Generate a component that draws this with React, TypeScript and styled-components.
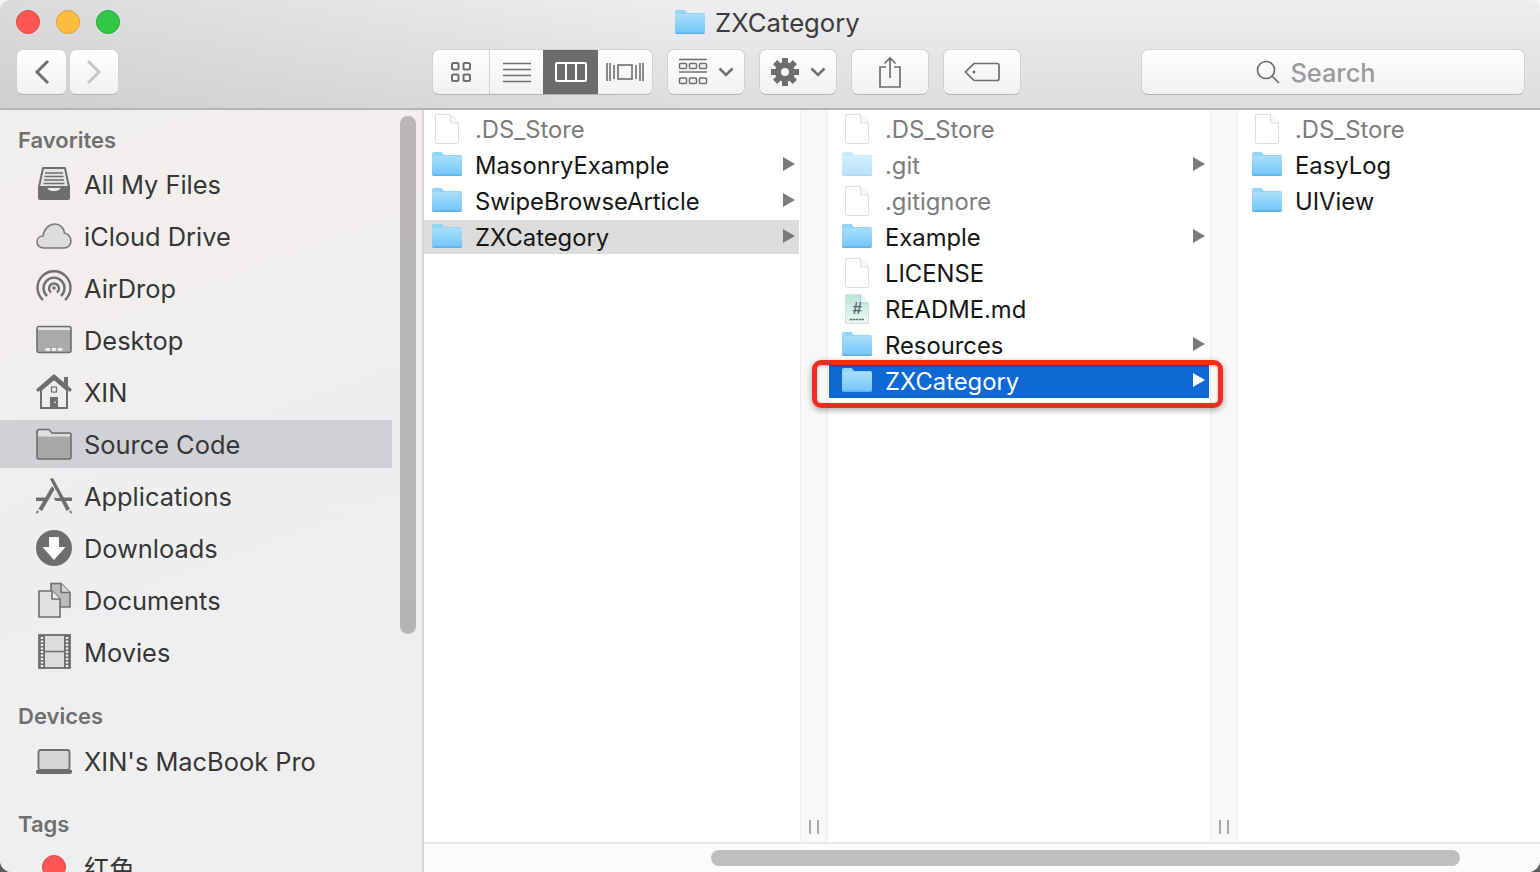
import React from 'react'
import styled, { createGlobalStyle } from 'styled-components'

const GlobalStyle = createGlobalStyle`
    html, body {
        margin: 0;
        padding: 0;
        height: 100%;
        overflow: hidden;
        background: linear-gradient(#f4f4f4 0%, #f4f4f4 50%, #5c5c5c 100%);
    }
    * {
        box-sizing: border-box;
    }
`

const GREY = '#6e6e6e'

const FolderIcon = ({ faded = false }: { faded?: boolean }) => (
    <svg width="30" height="26" viewBox="0 1.5 30 26" opacity={faded ? 0.5 : 1}>
        <defs>
            <linearGradient id="folderBody" x1="0" y1="0" x2="0" y2="1">
                <stop offset="0" stopColor="#a9defc" />
                <stop offset="1" stopColor="#72c6f8" />
            </linearGradient>
        </defs>
        <path d="M0 3.5a2 2 0 0 1 2-2h7.5l2.5 3h16a2 2 0 0 1 2 2V23a2 2 0 0 1-2 2H2a2 2 0 0 1-2-2z" fill="#92d4fa" />
        <path d="M0 7a1.5 1.5 0 0 1 1.5-1.5h27A1.5 1.5 0 0 1 30 7v16a2 2 0 0 1-2 2H2a2 2 0 0 1-2-2z" fill="url(#folderBody)" />
        <path d="M0 24h30a2 2 0 0 1-2 1.5H2A2 2 0 0 1 0 24z" fill="#5eb1e4" />
    </svg>
)

const FileIcon = () => (
    <svg width="30" height="32" viewBox="0 0 30 32">
        <path d="M3.5 1.5h15l8 8.5v19a1.500 1.500 0 0 1-1.500 1.500H5A1.500 1.500 0 0 1 3.500 29z" fill="#fff" stroke="#dedede" />
        <path d="M18.500 1.500V10h8" fill="#f7f7f7" stroke="#dedede" />
    </svg>
)

const MarkdownIcon = () => (
    <svg width="30" height="32" viewBox="0 0 30 32">
        <defs>
            <linearGradient id="mdPage" x1="0" y1="0" x2="0" y2="1">
                <stop offset="0" stopColor="#b9e5da" />
                <stop offset="1" stopColor="#eef8f6" />
            </linearGradient>
        </defs>
        <path d="M3.500 1.500h15l8 8.500v19a1.500 1.500 0 0 1-1.500 1.500H5A1.500 1.500 0 0 1 3.500 29z" fill="url(#mdPage)" stroke="#d6dedc" />
        <path d="M18.500 1.500V10h8" fill="#e9f6f2" stroke="#a9d3c9" />
        <text x="15" y="21" textAnchor="middle" fontSize="17" fontWeight="700" fontStyle="italic" fontFamily="Liberation Sans" fill="#5a6765">#</text>
        <path d="M7.500 26.500h15" stroke="#59706b" strokeWidth="1.400" strokeDasharray="2.400 .6" />
    </svg>
)

const AllFilesIcon = () => (
    <svg width="36" height="36" viewBox="0 0 36 36">
        <path d="M7 2h22l4 19H3z" fill="#e6e6e6" stroke={GREY} strokeWidth="2" strokeLinejoin="round" />
        <path d="M9 7h18M8.500 10.500h19M8 14h20M7.500 17.500h21" stroke={GREY} strokeWidth="1.500" />
        <path d="M2 21h9c1 3 3 4 7 4s6-1 7-4h9v11a2 2 0 0 1-2 2H4a2 2 0 0 1-2-2z" fill={GREY} />
    </svg>
)

const CloudIcon = () => (
    <svg width="36" height="36" viewBox="0 0 36 36">
        <path d="M8 30c-4.500 0-7-3-7-6 0-4 3-6 6-6 1-7 6-12 12-12 5 0 9 4 9.500 9 3.500.5 6.500 4 6.500 8 0 4-3 7-7 7z" fill="#dddddd" stroke="#777" strokeWidth="1.600" />
    </svg>
)

const AirDropIcon = () => (
    <svg width="36" height="36" viewBox="0 0 36 36">
        <g fill="none" stroke={GREY} strokeWidth="2.400">
            <path d="M7 30A16.500 16.500 0 1 1 29 30" />
            <path d="M11 26A10.500 10.500 0 1 1 25 26" />
            <path d="M15 22.500A5 5 0 1 1 21 22.500" />
        </g>
        <circle cx="18" cy="18" r="1.800" fill={GREY} />
    </svg>
)

const DesktopIcon = () => (
    <svg width="36" height="36" viewBox="0 0 36 36">
        <rect x="1" y="4.500" width="34" height="26" rx="2" fill="#aaaaaa" stroke={GREY} strokeWidth="1.600" />
        <path d="M2 5.500h32v2.500H2z" fill="#e6e6e6" />
        <path d="M9.500 26h4.500v3H9.500zM15.700 26h4.500v3h-4.500zM22 26h4.500v3H22z" fill="#ececec" />
    </svg>
)

const HomeIcon = () => (
    <svg width="36" height="36" viewBox="0 0 36 36">
        <path d="M5 16v18h26V16L18 5z" fill="#ededee" stroke={GREY} strokeWidth="2" />
        <path d="M18 0l10 8.500V3h4v9l4 3.500-2 2.500L18 5 2 18l-2-2.500z" fill={GREY} />
        <rect x="15.500" y="13" width="5" height="5" fill="none" stroke={GREY} strokeWidth="1.200" />
        <path d="M14 23h8v11h-8z" fill={GREY} />
        <rect x="18.500" y="27.500" width="1.500" height="1.500" fill="#ededee" />
    </svg>
)

const SidebarFolderIcon = () => (
    <svg width="36" height="36" viewBox="0 0 36 36">
        <path d="M1 5.500a2 2 0 0 1 2-2h10l3 3.500h17a2 2 0 0 1 2 2V31a2 2 0 0 1-2 2H3a2 2 0 0 1-2-2z" fill="#a7a8aa" stroke={GREY} strokeWidth="1.600" />
        <path d="M2 4.500h10.500L16 8h18v2.500H2z" fill="#dedfe1" />
    </svg>
)

const ApplicationsIcon = () => (
    <svg width="36" height="36" viewBox="0 0 36 36">
        <path d="M14 1l3-1 17 31-3.500 2z" fill={GREY} />
        <path d="M16 8l2.500 3.500L6 33l-3.500-2z" fill={GREY} />
        <path d="M0 19.500h9.500L8 23H0zM17.500 19.500H36V23H19.500z" fill={GREY} />
        <path d="M20 12l4 8h-7z" fill="#e4e4e4" />
        <path d="M1 32l-1 4 3-2zM35 32l1 4-3-2z" fill={GREY} />
    </svg>
)

const DownloadsIcon = () => (
    <svg width="36" height="36" viewBox="0 0 36 36">
        <circle cx="18" cy="18" r="18" fill={GREY} />
        <path d="M13 7h10v10h6.500L18 30 6.500 17H13z" fill="#fff" />
    </svg>
)

const DocumentsIcon = () => (
    <svg width="36" height="36" viewBox="0 0 36 36">
        <path d="M15 1.500h10l9 9V25H15z" fill="#bcbcbc" stroke={GREY} strokeWidth="1.600" />
        <path d="M25 1.500v9h9" fill="#d8d8d8" stroke={GREY} strokeWidth="1.600" />
        <path d="M3 9h13l8 8v18H3z" fill="#e2e2e2" stroke={GREY} strokeWidth="1.600" />
        <path d="M16 9v8h8" fill="#f0f0f0" stroke={GREY} strokeWidth="1.600" />
    </svg>
)

const MoviesIcon = () => (
    <svg width="36" height="36" viewBox="0 0 36 36">
        <rect x="3" y="1" width="31" height="33" fill="#dcdcdc" stroke={GREY} strokeWidth="1.800" />
        <path d="M3 1h6v33H3zM28 1h6v33h-6z" fill={GREY} />
        <path d="M9 17.500h19" stroke={GREY} strokeWidth="1.600" />
        <path d="M6 3v30M31 3v30" stroke="#f2f2f2" strokeWidth="2.400" strokeDasharray="2 1.500" />
    </svg>
)

const LaptopIcon = () => (
    <svg width="36" height="36" viewBox="0 0 36 36">
        <rect x="2.500" y="7" width="31" height="20" rx="2" fill="#d6d6d6" stroke={GREY} strokeWidth="1.800" />
        <path d="M0 27h36v2a2 2 0 0 1-2 2H2a2 2 0 0 1-2-2z" fill={GREY} />
    </svg>
)

const TagDotIcon = () => (
    <svg width="36" height="36" viewBox="0 0 36 36">
        <circle cx="18" cy="18" r="11.500" fill="#fc5753" stroke="#e2443f" />
    </svg>
)

const IconsIcon = () => (
    <svg width="24" height="24" viewBox="0 0 24 24" fill="none" stroke={GREY} strokeWidth="2">
        <rect x="3" y="3" width="6.500" height="6.500" rx="1.500" />
        <rect x="14.500" y="3" width="6.500" height="6.500" rx="1.500" />
        <rect x="3" y="14.500" width="6.500" height="6.500" rx="1.500" />
        <rect x="14.500" y="14.500" width="6.500" height="6.500" rx="1.500" />
    </svg>
)

const ListIcon = () => (
    <svg width="30" height="24" viewBox="0 0 30 24" stroke={GREY} strokeWidth="1.600">
        <path d="M1 3.500h28M1 9.500h28M1 15.500h28M1 21.500h28" />
    </svg>
)

const ColumnsIcon = () => (
    <svg width="32" height="24" viewBox="0 0 32 24" fill="none" stroke="#fff" strokeWidth="2">
        <rect x="1" y="3" width="30" height="18" rx="1" />
        <path d="M11 3v18M21 3v18" />
    </svg>
)

const CoverFlowIcon = () => (
    <svg width="38" height="24" viewBox="0 0 38 24" fill="none" stroke={GREY} strokeWidth="1.600">
        <rect x="12" y="5" width="14" height="14" />
        <path d="M1 3v18M4 3v18M8 5l0 14 M37 3v18M34 3v18M30 5v14" />
    </svg>
)

const ArrangeIcon = () => (
    <svg width="30" height="28" viewBox="0 0 30 28" fill="none" stroke={GREY} strokeWidth="1.500">
        <path d="M1 1.500h28M1 14h28" />
        <rect x="1.500" y="5.500" width="7" height="5" rx="1" />
        <rect x="11.500" y="5.500" width="7" height="5" rx="1" />
        <rect x="21.500" y="5.500" width="7" height="5" rx="1" />
        <rect x="1.500" y="20" width="7" height="5.500" rx="1" />
        <rect x="11.500" y="20" width="7" height="5.500" rx="1" />
        <rect x="21.500" y="20" width="7" height="5.500" rx="1" />
    </svg>
)

const GearIcon = () => {
    const teeth = [0, 45, 90, 135, 180, 225, 270, 315]
    return (
        <svg width="30" height="30" viewBox="0 0 30 30">
            {teeth.map(deg => (
                <rect key={deg} x="12" y="1" width="6" height="7" fill={GREY} transform={`rotate(${deg} 15 15)`} />
            ))}
            <circle cx="15" cy="15" r="10" fill={GREY} />
            <circle cx="15" cy="15" r="4" fill="#f4f4f4" />
        </svg>
    )
}

const Chevron = () => (
    <svg width="16" height="10" viewBox="0 0 16 10" fill="none" stroke={GREY} strokeWidth="2.600">
        <path d="M1.500 1.500L8 8l6.500-6.500" />
    </svg>
)

const ShareIcon = () => (
    <svg width="24" height="32" viewBox="0 0 24 32" fill="none" stroke={GREY} strokeWidth="1.700">
        <path d="M8 11H2v20h20V11h-6" />
        <path d="M12 22V2M6.500 7.500L12 2l5.500 5.500" />
    </svg>
)

const TagIcon = () => (
    <svg width="36" height="20" viewBox="0 0 36 20" fill="none" stroke={GREY} strokeWidth="1.700">
        <path d="M10 1.500h23a2 2 0 0 1 2 2v13a2 2 0 0 1-2 2H10L1.500 10z" />
        <circle cx="10" cy="10" r="1.500" fill={GREY} stroke="none" />
    </svg>
)

const SearchIcon = () => (
    <svg width="24" height="24" viewBox="0 0 24 24" fill="none" stroke={GREY} strokeWidth="1.700">
        <circle cx="10" cy="10" r="8.500" />
        <path d="M16 16l7 7" />
    </svg>
)

type SideItem = { label: string; icon: React.ReactNode; selected?: boolean }

const favorites: SideItem[] = [
    { label: 'All My Files', icon: <AllFilesIcon /> },
    { label: 'iCloud Drive', icon: <CloudIcon /> },
    { label: 'AirDrop', icon: <AirDropIcon /> },
    { label: 'Desktop', icon: <DesktopIcon /> },
    { label: 'XIN', icon: <HomeIcon /> },
    { label: 'Source Code', icon: <SidebarFolderIcon />, selected: true },
    { label: 'Applications', icon: <ApplicationsIcon /> },
    { label: 'Downloads', icon: <DownloadsIcon /> },
    { label: 'Documents', icon: <DocumentsIcon /> },
    { label: 'Movies', icon: <MoviesIcon /> },
]

type FileEntry = { name: string; kind: 'file' | 'folder' | 'md'; hidden?: boolean; state?: 'parent' | 'active' }

const firstColumn: FileEntry[] = [
    { name: '.DS_Store', kind: 'file', hidden: true },
    { name: 'MasonryExample', kind: 'folder' },
    { name: 'SwipeBrowseArticle', kind: 'folder' },
    { name: 'ZXCategory', kind: 'folder', state: 'parent' },
]

const secondColumn: FileEntry[] = [
    { name: '.DS_Store', kind: 'file', hidden: true },
    { name: '.git', kind: 'folder', hidden: true },
    { name: '.gitignore', kind: 'file', hidden: true },
    { name: 'Example', kind: 'folder' },
    { name: 'LICENSE', kind: 'file' },
    { name: 'README.md', kind: 'md' },
    { name: 'Resources', kind: 'folder' },
    { name: 'ZXCategory', kind: 'folder', state: 'active' },
]

const thirdColumn: FileEntry[] = [
    { name: '.DS_Store', kind: 'file', hidden: true },
    { name: 'EasyLog', kind: 'folder' },
    { name: 'UIView', kind: 'folder' },
]

const FileColumn = ({ entries, width, lead, inset, grip, arrows = true }: {
    entries: FileEntry[]
    width: number
    lead: number
    inset: number
    grip: boolean
    arrows?: boolean
}) => (
    <>
        <Column $width={width} $lead={lead}>
            {entries.map(entry => (
                <FileRow key={entry.name} $inset={inset} $state={entry.state}>
                    <RowIcon>
                        {entry.kind === 'folder' && <FolderIcon faded={entry.hidden} />}
                        {entry.kind === 'file' && <FileIcon />}
                        {entry.kind === 'md' && <MarkdownIcon />}
                    </RowIcon>
                    <FileName $hidden={entry.hidden} $active={entry.state === 'active'}>{entry.name}</FileName>
                    {arrows && entry.kind === 'folder' && <Disclosure $active={entry.state === 'active'} />}
                </FileRow>
            ))}
        </Column>
        {grip && <ColumnHandle><Grip /></ColumnHandle>}
    </>
)

export default function App() {
    return (
        <Window>
            <GlobalStyle />
            <TitleBar>
                <TitleRow>
                    <Lights>
                        <Light $color="#fc5753" $edge="#df4744" />
                        <Light $color="#fdbc40" $edge="#dea034" />
                        <Light $color="#33c748" $edge="#27aa35" />
                    </Lights>
                    <Title>
                        <FolderIcon />
                        <TitleText>ZXCategory</TitleText>
                    </Title>
                </TitleRow>
                <Toolbar>
                    <NavGroup>
                        <NavButton $width={51} aria-label="Back">
                            <svg width="16" height="26" viewBox="0 0 16 26" fill="none" stroke="#707070" strokeWidth="3"><path d="M14 2L3 13l11 11" /></svg>
                        </NavButton>
                        <NavButton $width={50} aria-label="Forward">
                            <svg width="16" height="26" viewBox="0 0 16 26" fill="none" stroke="#c6c6c6" strokeWidth="3"><path d="M2 2l11 11L2 24" /></svg>
                        </NavButton>
                    </NavGroup>
                    <ViewGroup>
                        <Segment $width={57} $divider><IconsIcon /></Segment>
                        <Segment $width={53}><ListIcon /></Segment>
                        <Segment $width={55} $active><ColumnsIcon /></Segment>
                        <Segment $width={54}><CoverFlowIcon /></Segment>
                    </ViewGroup>
                    <ToolButton $gap={10}><ArrangeIcon /><Chevron /></ToolButton>
                    <ToolButton $gap={10}><GearIcon /><Chevron /></ToolButton>
                    <ToolButton><ShareIcon /></ToolButton>
                    <ToolButton><TagIcon /></ToolButton>
                    <SearchField>
                        <SearchIcon />
                        <span>Search</span>
                    </SearchField>
                </Toolbar>
            </TitleBar>
            <Body>
                <Sidebar>
                    <SidebarThumb />
                    <SectionLabel $top={14} $bottom={4}>Favorites</SectionLabel>
                    <SideList>
                        {favorites.map(item => (
                            <SideRow key={item.label} $selected={item.selected}>
                                <SideIcon>{item.icon}</SideIcon>
                                <span>{item.label}</span>
                            </SideRow>
                        ))}
                    </SideList>
                    <SectionLabel $top={24} $bottom={5}>Devices</SectionLabel>
                    <SideRow>
                        <SideIcon><LaptopIcon /></SideIcon>
                        <span>XIN's MacBook Pro</span>
                    </SideRow>
                    <SectionLabel $top={23} $bottom={3}>Tags</SectionLabel>
                    <SideRow>
                        <SideIcon><TagDotIcon /></SideIcon>
                        <span>红色</span>
                    </SideRow>
                </Sidebar>
                <Browser>
                    <Columns>
                        <FileColumn entries={firstColumn} width={376} lead={0} inset={8} grip />
                        <FileColumn entries={secondColumn} width={382} lead={1} inset={13} grip />
                        <FileColumn entries={thirdColumn} width={302} lead={1} inset={13} grip={false} arrows={false} />
                        <Annotation />
                    </Columns>
                    <ScrollStrip>
                        <ScrollThumb />
                    </ScrollStrip>
                </Browser>
            </Body>
        </Window>
    )
}

const Window = styled.div`
    width: 1540px;
    height: 872px;
    display: flex;
    flex-direction: column;
    overflow: hidden;
    border-radius: 10px 10px 12px 12px;
    background: #fff;
    font-family: Inter, "Noto Sans CJK SC", sans-serif;
`

const TitleBar = styled.header`
    height: 110px;
    flex: none;
    border-bottom: 2px solid #b4b3b5;
    background:
        linear-gradient(to right, rgba(170, 170, 172, .28), rgba(170, 170, 172, 0) 45%),
        linear-gradient(to bottom, #eeedef 0%, #dddcde 100%);
`

const TitleRow = styled.div`
    height: 46px;
    padding: 10px 0 0 16px;
    display: flex;
    align-items: flex-start;
`

const Lights = styled.div`
    display: flex;
    gap: 16px;
    width: 104px;
`

const Light = styled.span<{ $color: string; $edge: string }>`
    width: 24px;
    height: 24px;
    border-radius: 50%;
    background: ${p => p.$color};
    border: 1px solid ${p => p.$edge};
`

const Title = styled.div`
    margin-left: 555px;
    display: flex;
    align-items: center;
    gap: 10px;
    height: 26px;
    font-size: 25.7px;
    color: #3d3b3d;
`

const TitleText = styled.span`
    margin-top: -2px;
`

const Toolbar = styled.div`
    display: flex;
    align-items: flex-start;
    margin-top: 3px;
    padding: 0 15px 0 16px;
`

const NavGroup = styled.div`
    display: flex;
    gap: 2px;
    margin-right: 313px;
`

const buttonSkin = `
    border: 1px solid #d2d1d3;
    border-bottom-color: #b3b2b4;
    background: linear-gradient(#ffffff, #f1f1f1);
    border-radius: 7px;
`

const NavButton = styled.button<{ $width: number }>`
    ${buttonSkin}
    width: ${p => p.$width}px;
    height: 46px;
    padding: 0;
    display: flex;
    align-items: center;
    justify-content: center;
`

const ViewGroup = styled.div`
    ${buttonSkin}
    display: flex;
    height: 46px;
    overflow: hidden;
    margin-right: 14px;
`

const Segment = styled.div<{ $width: number; $active?: boolean; $divider?: boolean }>`
    width: ${p => p.$width}px;
    display: flex;
    align-items: center;
    justify-content: center;
    background: ${p => (p.$active ? '#6b6b6b' : 'transparent')};
    border-right: ${p => (p.$divider ? '1px solid #d2d1d3' : 'none')};
`

const ToolButton = styled.button<{ $gap?: number }>`
    ${buttonSkin}
    width: 78px;
    height: 46px;
    padding: 0;
    margin-right: 14px;
    display: flex;
    align-items: center;
    justify-content: center;
    gap: ${p => p.$gap ?? 0}px;
`

const SearchField = styled.div`
    ${buttonSkin}
    width: 384px;
    height: 46px;
    margin-left: auto;
    padding-right: 34px;
    display: flex;
    align-items: center;
    justify-content: center;
    gap: 10px;
    font-size: 25.4px;
    font-weight: 500;
    color: #9b9a9c;
`

const Body = styled.div`
    flex: 1;
    min-height: 0;
    display: flex;
`

const Sidebar = styled.aside`
    position: relative;
    width: 424px;
    flex: none;
    overflow: hidden;
    padding-right: 30px;
    border-right: 2px solid #d6d6d6;
    background: linear-gradient(160deg, #f0efef 0%, #f3eeed 18%, #eeeef0 45%, #efeff0 100%);
`

const SidebarThumb = styled.div`
    position: absolute;
    top: 6px;
    left: 400px;
    width: 16px;
    height: 518px;
    border-radius: 8px;
    background: linear-gradient(#bab6b5, #b5b5b7);
`

const SectionLabel = styled.h2<{ $top: number; $bottom: number }>`
    margin: ${p => p.$top}px 0 ${p => p.$bottom}px 18px;
    height: 32px;
    line-height: 32px;
    font-size: 22px;
    font-weight: 600;
    color: #6f6f70;
`

const SideList = styled.div`
    display: flex;
    flex-direction: column;
    gap: 4px;
`

const SideRow = styled.div<{ $selected?: boolean }>`
    height: 48px;
    padding-left: 36px;
    display: flex;
    align-items: center;
    gap: 12px;
    font-size: 25.4px;
    color: #363637;
    background: ${p => (p.$selected ? '#d0d1d4' : 'transparent')};
`

const SideIcon = styled.span`
    width: 36px;
    height: 36px;
    flex: none;
    display: block;
    svg {
        display: block;
    }
`

const Browser = styled.main`
    flex: 1;
    min-width: 0;
    display: flex;
    flex-direction: column;
`

const Columns = styled.div`
    position: relative;
    flex: 1;
    min-height: 0;
    display: flex;
`

const Column = styled.div<{ $width: number; $lead: number }>`
    width: ${p => p.$width}px;
    flex: none;
    padding: 2px 1px 0 ${p => p.$lead}px;
    background: #fff;
`

const FileRow = styled.div<{ $inset: number; $state?: 'parent' | 'active' }>`
    height: 34px;
    margin-bottom: 2px;
    padding: 0 4px 0 ${p => p.$inset}px;
    display: flex;
    align-items: center;
    background: ${p => (p.$state === 'active' ? '#0f69d4' : p.$state === 'parent' ? '#dcdcdc' : 'transparent')};
`

const RowIcon = styled.span`
    width: 30px;
    height: 32px;
    flex: none;
    display: flex;
    align-items: center;
    justify-content: center;
    margin-right: 13px;
`

const FileName = styled.span<{ $hidden?: boolean; $active?: boolean }>`
    flex: 1;
    font-size: 23.8px;
    white-space: nowrap;
    color: ${p => (p.$active ? '#fff' : p.$hidden ? '#7c7c7c' : '#161616')};
`

const Disclosure = styled.i<{ $active?: boolean }>`
    width: 0;
    height: 0;
    margin-top: -2px;
    border-style: solid;
    border-width: 7px 0 7px 12px;
    border-color: transparent transparent transparent ${p => (p.$active ? '#fff' : '#7b7b7b')};
`

const ColumnHandle = styled.div`
    width: 28px;
    flex: none;
    display: flex;
    justify-content: center;
    align-items: flex-end;
    padding-bottom: 8px;
    background: #f8f8f8;
    border-left: 1px solid #ebebeb;
    border-right: 1px solid #ebebeb;
`

const Grip = styled.span`
    width: 10px;
    height: 14px;
    border-left: 2px solid #a9a9a9;
    border-right: 2px solid #a9a9a9;
`

const Annotation = styled.div`
    position: absolute;
    left: 388px;
    top: 250px;
    width: 411px;
    height: 48px;
    border: 5px solid #f42a20;
    border-radius: 9px;
    box-shadow: 0 2px 6px rgba(0, 0, 0, .35), inset 0 1px 3px rgba(0, 0, 0, .3);
`

const ScrollStrip = styled.div`
    height: 30px;
    flex: none;
    padding: 6px 0 0 287px;
    border-top: 2px solid #e9e9e9;
    background: #fbfbfb;
`

const ScrollThumb = styled.div`
    width: 749px;
    height: 16px;
    border-radius: 8px;
    background: #bfbfbf;
`
